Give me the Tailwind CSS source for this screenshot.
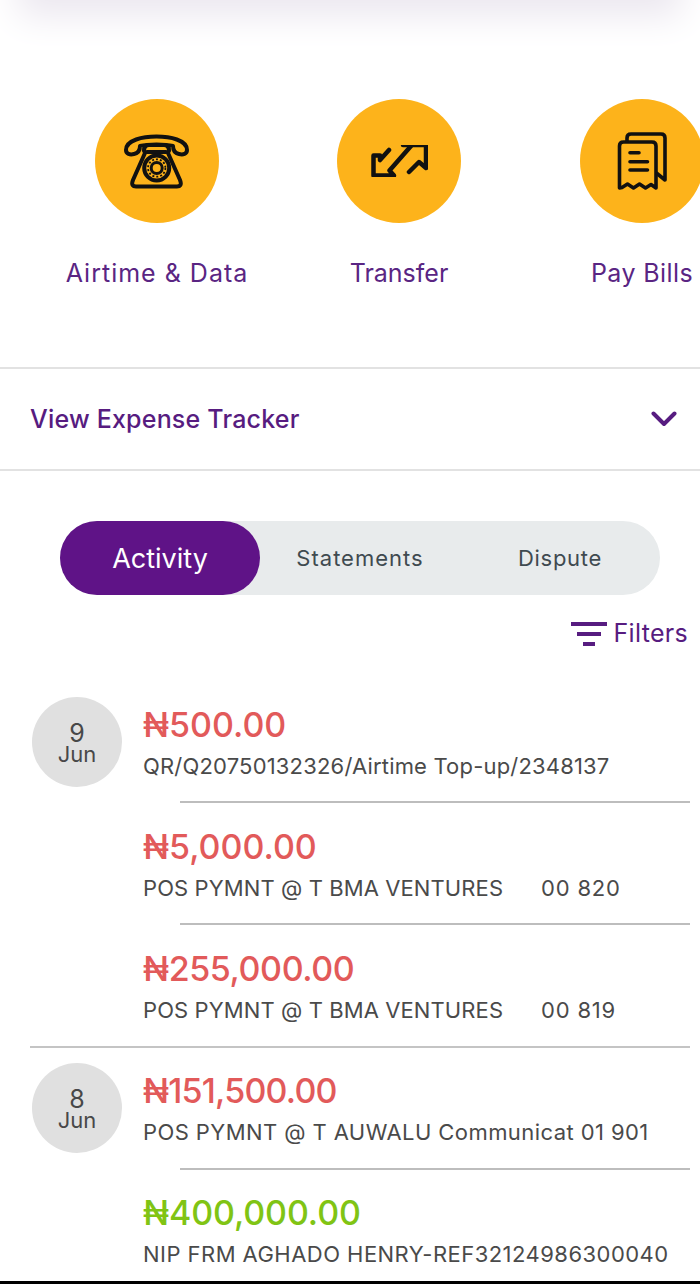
<!DOCTYPE html>
<html lang="en">
<head>
    <meta charset="UTF-8">
    <meta name="viewport" content="width=device-width, initial-scale=1.0">
    <title>Account activity</title>
    <script src="https://cdn.jsdelivr.net/npm/@tailwindcss/browser@4"></script>
</head>
<body class="bg-white font-['Inter','Noto_Sans',sans-serif] overflow-hidden">
<div class="relative w-[700px] h-[1284px] overflow-hidden bg-white">

    <!-- shadow of the card above -->
    <div class="relative h-[46px] overflow-hidden">
        <div class="absolute -top-[40px] inset-x-[30px] h-[40px] bg-[#ebe6ef] shadow-[0_4px_36px_12px_#ebe7ef]"></div>
    </div>

    <!-- Quick actions -->
    <div class="flex h-[323px] pt-[53px] pl-[36px] border-b-2 border-[#e2e2e2] overflow-hidden">
        <div class="w-[242px] shrink-0 flex flex-col items-center">
            <div class="w-[124px] h-[124px] rounded-full bg-[#fdb31b] flex items-center justify-center">
                <svg width="68" height="56" viewBox="0 0 68 56" fill="none" stroke="#111" stroke-width="4" stroke-linejoin="round" stroke-linecap="round">
                    <path d="M3 17C3 7 20 3.5 33.5 3.5S64 7 64 17c0 4-4 5-8 4-5-1-6-4-6-8-4-1-10-1.500-16.500-1.500S21 12 17 13c0 4-1 7-6 8-4 1-8 0-8-4z"/>
                    <path d="M22 20L10 47c-2 5 0 6.500 3 6.500h41c3 0 5-1.500 3-6.500L45 20"/>
                    <path d="M21 18c0-4 2-6 5-6h15c3 0 5 2 5 6M24 19h19"/>
                    <circle cx="33.700" cy="35" r="12.500"/>
                    <circle cx="33.700" cy="35" r="5.500" stroke-width="3"/>
                    <circle cx="33.700" cy="35" r="8.700" stroke-width="1.800" stroke-dasharray="2 2" stroke-linecap="butt"/>
                </svg>
            </div>
            <span class="mt-[36px] text-[25px] leading-[28px] tracking-[1px] text-[#5a2583] whitespace-nowrap">Airtime &amp; Data</span>
        </div>
        <div class="w-[242px] shrink-0 flex flex-col items-center">
            <div class="w-[124px] h-[124px] rounded-full bg-[#fdb31b] flex items-center justify-center">
                <svg width="58" height="32" viewBox="30 35 58 32" fill="none" stroke="#111" stroke-width="4.500" stroke-linejoin="round" stroke-linecap="round">
                    <path d="M49 40L40 50V45.500H33.500V65.500H54L49.500 60.500L71 36"/>
                    <path d="M63 35H86V58L79 52L69 62"/>
                </svg>
            </div>
            <span class="mt-[36px] text-[25px] leading-[28px] text-[#5a2583] whitespace-nowrap">Transfer</span>
        </div>
        <div class="w-[242px] ml-[1px] shrink-0 flex flex-col items-center">
            <div class="w-[124px] h-[124px] rounded-full bg-[#fdb31b] flex items-center justify-center">
                <svg width="50" height="64" viewBox="157 49 50 64" fill="none" stroke="#111" stroke-width="3.600" stroke-linejoin="round" stroke-linecap="round">
                    <path d="M159.500 108V66q0-4 4-4H192q4 0 4 4V108l-5-3.500-5.500 3.500-6-4-6 4-6-4-5.500 3.500z"/>
                    <path d="M167 61V58q0-4 4-4H201q4 0 4 4V100l-8-6.500"/>
                    <path d="M170 72.700H179M170 81.700H187.500M170 90H187.500"/>
                </svg>
            </div>
            <span class="mt-[36px] text-[25px] leading-[28px] tracking-[0.4px] text-[#5a2583] whitespace-nowrap">Pay Bills</span>
        </div>
    </div>

    <!-- Expense tracker -->
    <div class="flex h-[102px] items-center justify-between pl-[30px] pr-[23px] border-b-2 border-[#e2e2e2]">
        <span class="mt-[2px] text-[25px] tracking-[0.2px] font-medium text-[#571c80]">View Expense Tracker</span>
        <svg width="26" height="16" viewBox="0 0 26 16" fill="none" stroke="#571c80" stroke-width="4" stroke-linecap="round" stroke-linejoin="round">
            <path d="M2.500 2.500L13 13L23.500 2.500"/>
        </svg>
    </div>

    <!-- Tabs -->
    <div class="mt-[50px] ml-[60px] w-[600px] h-[74px] flex items-center rounded-full bg-[#e8ebec]">
        <div class="w-[200px] h-full pt-[2px] flex items-center justify-center rounded-full bg-[#5f1387] text-white text-[27px]">Activity</div>
        <div class="w-[200px] text-center text-[22px] tracking-[1px] text-[#3f4a50]">Statements</div>
        <div class="w-[200px] text-center text-[22px] tracking-[0.7px] text-[#3f4a50]">Dispute</div>
    </div>

    <!-- Filters -->
    <div class="h-[26px] mt-[26px] pr-[12px] flex items-center justify-end gap-[7px]">
        <svg width="36" height="26" viewBox="0 0 36 26" fill="#571c80">
            <rect x="0" y="1" width="36" height="4"/>
            <rect x="6" y="11" width="24" height="4"/>
            <rect x="12" y="21" width="12" height="4"/>
        </svg>
        <span class="text-[25px] tracking-[0.3px] text-[#571c80]">Filters</span>
    </div>

    <!-- Transactions -->
    <div class="mt-[34px] ml-[30px] mr-[10px] flex border-b-2 border-[#c4c4c4]">
        <div class="w-[92px] pl-[2px] pt-[16px] shrink-0">
            <div class="w-[90px] h-[90px] rounded-full bg-[#e0e0e0] flex flex-col items-center justify-center text-[#484848]">
                <span class="text-[25px] leading-[22px] mt-[2px]">9</span>
                <span class="text-[22px] leading-[20px]">Jun</span>
            </div>
        </div>
        <div class="flex-1 min-w-0">
            <div class="h-[122px] relative pl-[21px] pt-[25px]">
                <div class="text-[34px] leading-[38px] font-medium text-[#e25a5a]">₦500.00</div>
                <div class="mt-[8px] text-[22px] leading-[28px] tracking-[0.18px] text-[#4a4a4a] whitespace-nowrap">QR/Q20750132326/Airtime Top-up/2348137</div>
                <div class="absolute left-[58px] right-0 bottom-0 h-[2px] bg-[#bdbdbd]"></div>
            </div>
            <div class="h-[122px] relative pl-[21px] pt-[25px]">
                <div class="text-[34px] leading-[38px] font-medium text-[#e25a5a]">₦5,000.00</div>
                <div class="mt-[8px] text-[22px] leading-[28px] tracking-[0.1px] text-[#4a4a4a] flex gap-[38px]"><span>POS PYMNT @ T BMA VENTURES</span><span class="tracking-[0.8px]">00 820</span></div>
                <div class="absolute left-[58px] right-0 bottom-0 h-[2px] bg-[#bdbdbd]"></div>
            </div>
            <div class="h-[121px] pl-[21px] pt-[25px]">
                <div class="text-[34px] leading-[38px] tracking-[-0.4px] font-medium text-[#e25a5a]">₦255,000.00</div>
                <div class="mt-[8px] text-[22px] leading-[28px] tracking-[0.1px] text-[#4a4a4a] flex gap-[38px]"><span>POS PYMNT @ T BMA VENTURES</span><span class="tracking-[0.8px]">00 819</span></div>
            </div>
        </div>
    </div>

    <div class="ml-[30px] mr-[10px] flex">
        <div class="w-[92px] pl-[2px] pt-[15px] shrink-0">
            <div class="w-[90px] h-[90px] rounded-full bg-[#e0e0e0] flex flex-col items-center justify-center text-[#484848]">
                <span class="text-[25px] leading-[22px] mt-[2px]">8</span>
                <span class="text-[22px] leading-[20px]">Jun</span>
            </div>
        </div>
        <div class="flex-1 min-w-0">
            <div class="h-[122px] relative pl-[21px] pt-[24px]">
                <div class="text-[34px] leading-[38px] tracking-[-0.8px] font-medium text-[#e25a5a]">₦151,500.00</div>
                <div class="mt-[8px] text-[22px] leading-[28px] tracking-[0.42px] text-[#4a4a4a] whitespace-nowrap">POS PYMNT @ T AUWALU Communicat 01 901</div>
                <div class="absolute left-[58px] right-0 bottom-0 h-[2px] bg-[#bdbdbd]"></div>
            </div>
            <div class="h-[112px] pl-[21px] pt-[24px]">
                <div class="text-[34px] leading-[38px] tracking-[-0.1px] font-medium text-[#80c414]">₦400,000.00</div>
                <div class="mt-[8px] text-[22px] leading-[28px] tracking-[0.46px] text-[#4a4a4a] whitespace-nowrap">NIP FRM AGHADO HENRY-REF32124986300040</div>
            </div>
        </div>
    </div>

    <div class="absolute inset-x-0 bottom-0 h-[3px] bg-black"></div>
</div>
</body>
</html>
